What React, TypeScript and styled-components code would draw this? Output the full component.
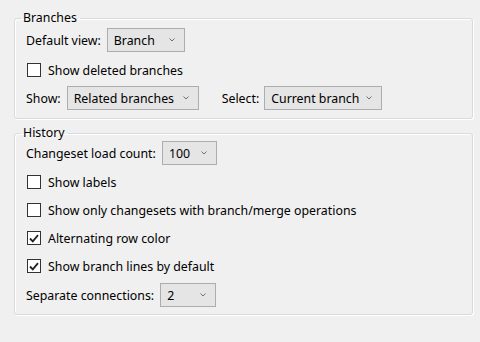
import styled, { createGlobalStyle } from 'styled-components';

const GlobalStyle = createGlobalStyle`
  html, body {
    margin: 0;
    padding: 0;
    background: #f0f0f0;
  }
  body {
    font-family: "Noto Sans", "Segoe UI", sans-serif;
    font-size: 12.35px;
    color: #000;
  }
`;

const Page = styled.div`
  width: 480px;
  height: 342px;
  box-sizing: border-box;
  padding: 10px 0 0 14px;
`;

const Group = styled.fieldset<{ $pb: number }>`
  width: 459px;
  box-sizing: border-box;
  margin: 0 0 6px 0;
  padding: 0 10px ${(p) => p.$pb}px 11px;
  border: 1px solid #d5dbe0;
  border-radius: 3px;
  box-shadow: inset 1px 1px 0 #fff, 1px 1px 0 #fff;
  min-width: 0;
`;

const Legend = styled.legend`
  padding: 0 3px 0 2px;
  margin-left: -5px;
  line-height: 16px;
  height: 16px;
`;

const Row = styled.div<{ $mt: number }>`
  display: flex;
  align-items: center;
  height: 24px;
  margin-top: ${(p) => p.$mt}px;
`;

const Label = styled.span<{ $gap?: number }>`
  margin-right: ${(p) => p.$gap ?? 6}px;
  white-space: nowrap;
`;

const Spacer = styled.div<{ $w: number }>`
  width: ${(p) => p.$w}px;
`;

const ComboBox = styled.div<{ $w: number }>`
  width: ${(p) => p.$w}px;
  height: 24px;
  box-sizing: border-box;
  border: 1px solid #adadad;
  background: #e5e5e5;
  display: flex;
  align-items: center;
  justify-content: space-between;
  padding: 0 9px 0 6px;
  white-space: nowrap;
`;

const CheckRow = styled.label`
  display: flex;
  align-items: center;
  gap: 7px;
  white-space: nowrap;
`;

const Box = styled.span`
  width: 14px;
  height: 14px;
  box-sizing: border-box;
  border: 1px solid #333;
  background: #fff;
  margin-left: 1px;
  display: flex;
  align-items: center;
  justify-content: center;
`;

const Chevron = () => (
  <svg width="6" height="4" viewBox="0 0 6 4">
    <path d="M0.5 0.5 L3 3 L5.5 0.5" fill="none" stroke="#707070" strokeWidth="1" />
  </svg>
);

const Check = () => (
  <svg width="10" height="9" viewBox="0 0 10 9">
    <path d="M1 4.5 L3.8 7.3 L9 1.2" fill="none" stroke="#222" strokeWidth="1.8" />
  </svg>
);

const Combo = ({ value, w }: { value: string; w: number }) => (
  <ComboBox $w={w}>
    <span>{value}</span>
    <Chevron />
  </ComboBox>
);

const CheckBox = ({ label, checked }: { label: string; checked?: boolean }) => (
  <CheckRow>
    <Box>{checked && <Check />}</Box>
    <span>{label}</span>
  </CheckRow>
);

export default function App() {
  return (
    <>
      <GlobalStyle />
      <Page>
        <Group $pb={8}>
          <Legend>Branches</Legend>
          <Row $mt={2}>
            <Label>Default view:</Label>
            <Combo value="Branch" w={78} />
          </Row>
          <Row $mt={6}>
            <CheckBox label="Show deleted branches" />
          </Row>
          <Row $mt={4}>
            <Label>Show:</Label>
            <Combo value="Related branches" w={132} />
            <Spacer $w={23} />
            <Label $gap={5}>Select:</Label>
            <Combo value="Current branch" w={118} />
          </Row>
        </Group>
        <Group $pb={7}>
          <Legend>History</Legend>
          <Row $mt={0}>
            <Label>Changeset load count:</Label>
            <Combo value="100" w={55} />
          </Row>
          <Row $mt={5}>
            <CheckBox label="Show labels" />
          </Row>
          <Row $mt={4}>
            <CheckBox label="Show only changesets with branch/merge operations" />
          </Row>
          <Row $mt={4}>
            <CheckBox label="Alternating row color" checked />
          </Row>
          <Row $mt={4}>
            <CheckBox label="Show branch lines by default" checked />
          </Row>
          <Row $mt={5}>
            <Label>Separate connections:</Label>
            <Combo value="2" w={56} />
          </Row>
        </Group>
      </Page>
    </>
  );
}
